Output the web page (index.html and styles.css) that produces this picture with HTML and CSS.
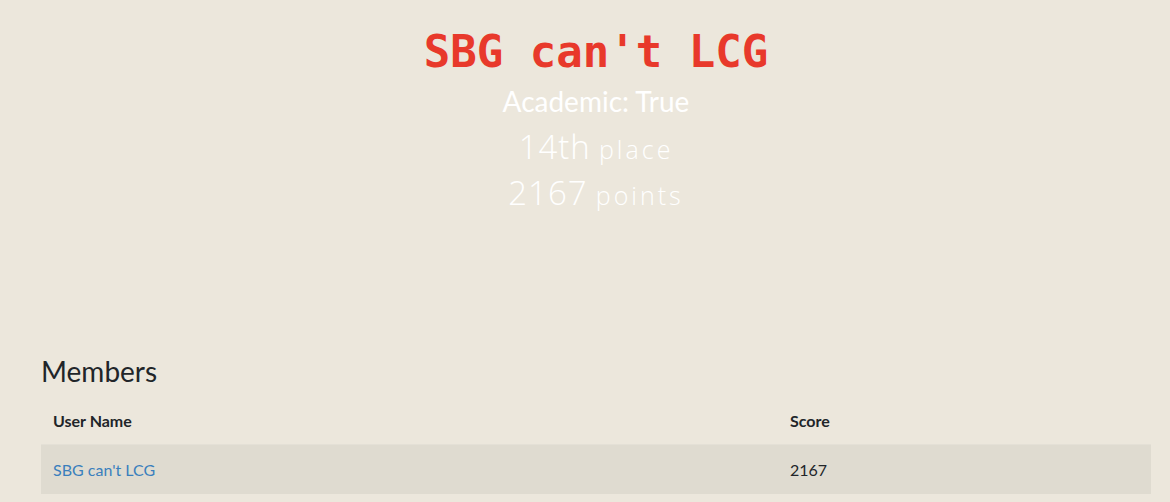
FILE: index.html
```html
<!DOCTYPE html>
<html>
<head>
<meta charset="utf-8">
<link rel="stylesheet" href="styles.css">
</head>
<body>
<div class="container">
  <header class="hero">
    <h1 class="team-name">SBG can't LCG</h1>
    <div class="academic">Academic: True</div>
    <div class="stat"><span class="big">14th</span> <span class="small">place</span></div>
    <div class="stat"><span class="big">2167</span> <span class="small">points</span></div>
  </header>
  <section class="members">
    <h3 class="members-title">Members</h3>
    <table class="table">
      <thead>
        <tr><th class="col-name">User Name</th><th>Score</th></tr>
      </thead>
      <tbody>
        <tr><td class="col-name"><a href="#">SBG can't LCG</a></td><td>2167</td></tr>
      </tbody>
    </table>
  </section>
</div>
</body>
</html>
```
FILE: styles.css
```css
html, body {
  margin: 0;
  padding: 0;
  background: #ece7dc;
  font-family: Lato, "Liberation Sans", sans-serif;
  color: #212529;
}
.container {
  width: 1110px;
  margin-left: 41px;
}
.hero {
  text-align: center;
  padding-top: 26px;
  height: 354px;
  box-sizing: border-box;
  color: #ffffff;
}
.team-name {
  margin: 0;
  font-family: "DejaVu Sans Mono", "Liberation Mono", monospace;
  font-weight: bold;
  font-size: 44px;
  line-height: 52px;
  color: #e8392b;
}
.academic {
  font-size: 28px;
  line-height: 46px;
}
.stat {
  font-family: "Open Sans", Lato, sans-serif;
  font-weight: 300;
  height: 46px;
  line-height: 46px;
  letter-spacing: 1px;
  word-spacing: 3px;
}
.big { font-size: 33px; line-height: 46px; }
.small { font-size: 25px; line-height: 46px; letter-spacing: 3px; }
.members-title {
  margin: 0 0 10px 0;
  font-size: 28px;
  font-weight: 400;
  line-height: 34px;
}
.table {
  width: 100%;
  border-collapse: collapse;
  font-size: 16px;
}
.table th {
  text-align: left;
  font-weight: bold;
  padding: 12px;
  line-height: 22px;
}
.table td {
  padding: 12px;
  line-height: 25px;
  border-top: 1px solid #e4e0d6;
}
.table tbody tr { background: #dfdbd0; }
.col-name { width: 713px; }
.table a { color: #3a7fbd; text-decoration: none; }
```
